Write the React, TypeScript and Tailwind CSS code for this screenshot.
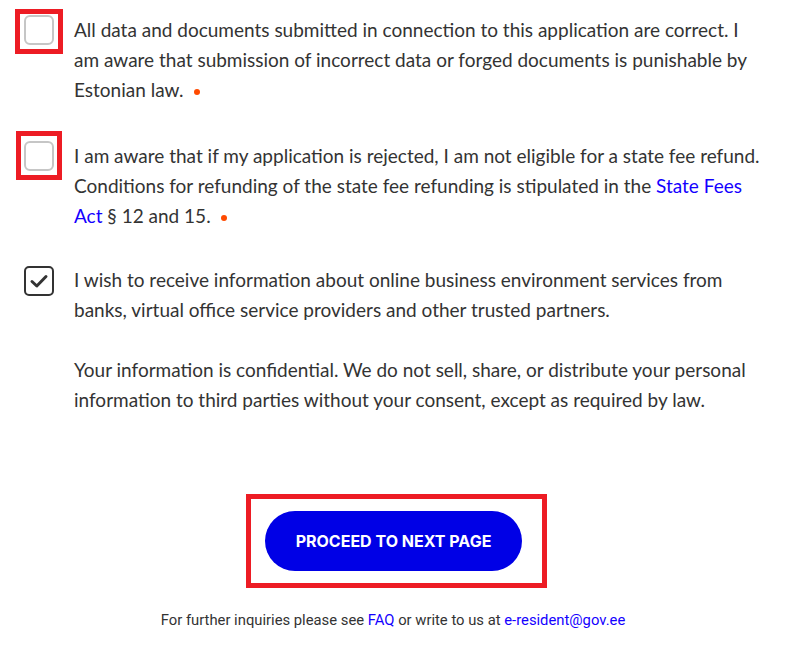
import React from "react";

const RequiredDot = () => (
  <span className="ml-[10px] inline-block h-[6px] w-[6px] rounded-full bg-[#ff4a00] align-middle" />
);

function Checkbox({ checked }: { checked?: boolean }) {
  if (checked) {
    return (
      <div className="flex h-[30px] w-[30px] shrink-0 items-center justify-center rounded-[5px] border-[2.5px] border-[#333]">
        <svg width="22" height="22" viewBox="0 0 22 22" fill="none">
          <path d="M4 11.5 L8.8 16 L18 6.5" stroke="#333" strokeWidth="3" strokeLinecap="round" strokeLinejoin="round" />
        </svg>
      </div>
    );
  }
  return <div className="h-[30px] w-[30px] shrink-0 rounded-[6px] border-2 border-[#c6c6c6] bg-white" />;
}

export default function App() {
  return (
    <div className="min-h-[648px] w-[786px] bg-white text-[#333]" style={{ fontFamily: "Lato, 'Noto Sans', sans-serif" }}>
      <div className="pl-[24px] pr-[20px] pt-[15px] text-[19px] leading-[30px]">
        <div className="flex gap-[20px]">
          <div className="relative">
            <Checkbox />
            <div className="pointer-events-none absolute -left-[9px] -top-[6px] h-[45px] w-[48px] border-[5px] border-[#ed1c24]" />
          </div>
          <p>
            All data and documents submitted in connection to this application are correct. I am aware that submission
            of incorrect data or forged documents is punishable by Estonian law.
            <RequiredDot />
          </p>
        </div>

        <div className="mt-[36px] flex gap-[20px]">
          <div className="relative">
            <Checkbox />
            <div className="pointer-events-none absolute -left-[8px] -top-[10px] h-[49px] w-[46px] border-[5px] border-[#ed1c24]" />
          </div>
          <p>
            I am aware that if my application is rejected, I am not eligible for a state fee refund. Conditions for
            refunding of the state fee refunding is stipulated in the{" "}
            <a className="text-[#1400ff]">State Fees Act</a> § 12 and 15.
            <RequiredDot />
          </p>
        </div>

        <div className="mt-[34px] flex gap-[20px]">
          <div className="pt-[1px]">
            <Checkbox checked />
          </div>
          <div>
            <p>
              I wish to receive information about online business environment services from banks, virtual office
              service providers and other trusted partners.
            </p>
            <p className="mt-[30px]">
              Your information is confidential. We do not sell, share, or distribute your personal information to third
              parties without your consent, except as required by law.
            </p>
          </div>
        </div>
      </div>

      <div className="mt-[79px] flex justify-center">
        <div className="relative ml-[7px] border-[5px] border-[#ed1c24] pb-[12px] pl-[14px] pr-[20px] pt-[12px]">
          <button
            className="flex h-[60px] w-[257px] items-center justify-center rounded-full bg-[#0000e6] text-[16px] font-bold tracking-[0px] text-white"
            style={{ fontFamily: "Inter, 'Noto Sans', sans-serif" }}
          >
            PROCEED TO NEXT PAGE
          </button>
        </div>
      </div>

      <p
        className="mt-[22px] text-center text-[14.8px] leading-[20px] text-[#333]"
        style={{ fontFamily: "Roboto, 'Noto Sans', sans-serif" }}
      >
        For further inquiries please see <a className="text-[#1400ff]">FAQ</a> or write to us at{" "}
        <a className="text-[#1400ff]">e-resident@gov.ee</a>
      </p>
    </div>
  );
}
